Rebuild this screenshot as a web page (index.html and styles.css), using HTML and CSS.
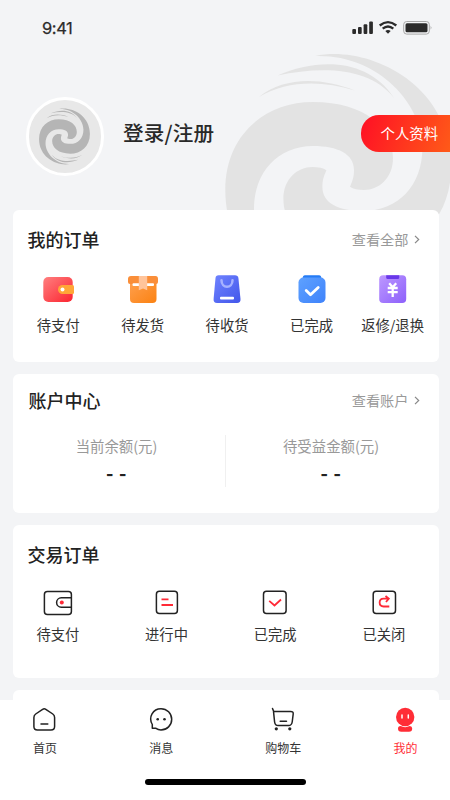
FILE: index.html
```html
<!DOCTYPE html>
<html lang="zh-CN">
<head>
<meta charset="utf-8">
<meta name="viewport" content="width=device-width, initial-scale=1">
<title>我的</title>
<link rel="stylesheet" href="styles.css">
</head>
<body>
<svg class="defs" aria-hidden="true">
  <defs>
    <g id="swirl-half">
      <path d="M361 301C310 312 225.3 275 225.3 190C225.3 135 265 102 313 102C365 102 393 128 393 158C393 178 379 190 364 190C358 190 353 189 350 186.7C353 180 354 176 354 170C354 154 338 146 313 146C278 146 254 172 254 209C254 255 300 303 361 301Z"/>
      <path d="M277.500 75.500C318 58 368 58 394 98C370 67 322 66 277.500 75.500Z"/>
      <path d="M259 97C284 77 320 77 355 90.500C320 80 286 81 259 97Z"/>
    </g>
    <symbol id="swirl" viewBox="225 52 226.500 253">
      <use href="#swirl-half"/>
      <use href="#swirl-half" transform="rotate(180 338.200 178.500)"/>
    </symbol>
    <linearGradient id="g-red" x1="0" y1="0" x2="1" y2="1"><stop offset="0" stop-color="#ff7f7f"/><stop offset="1" stop-color="#fb2430"/></linearGradient>
    <linearGradient id="g-orange" x1="0" y1="0" x2="1" y2="1"><stop offset="0" stop-color="#ffa04f"/><stop offset="1" stop-color="#fb8212"/></linearGradient>
    <linearGradient id="g-indigo" x1="0" y1="0" x2="1" y2="1"><stop offset="0" stop-color="#6f83ff"/><stop offset="1" stop-color="#4256ea"/></linearGradient>
    <linearGradient id="g-blue" x1="0" y1="0" x2="1" y2="1"><stop offset="0" stop-color="#5ea1ff"/><stop offset="1" stop-color="#3f83fb"/></linearGradient>
    <linearGradient id="g-purple" x1="0" y1="0" x2="1" y2="1"><stop offset="0" stop-color="#bd98ff"/><stop offset="1" stop-color="#8d60fb"/></linearGradient>
  </defs>
</svg>
<div class="screen">
  <svg class="backdrop"><use href="#swirl"/></svg>
  <header class="status">
    <span class="time">9:41</span>
    <svg class="signals" width="82" height="16" viewBox="351 20 82 16">
      <g fill="#2b2b2b">
        <rect x="352.300" y="29" width="3.700" height="5" rx="1"/><rect x="358" y="27" width="3.700" height="7" rx="1"/><rect x="363.600" y="24.300" width="3.700" height="9.700" rx="1"/><rect x="369.200" y="21.500" width="3.700" height="12.500" rx="1"/>
        <path d="M385.300 30.900Q388 28.900 390.700 30.900L388 33.700Z"/>
        <rect x="405.500" y="23.300" width="22" height="9" rx="1.500"/>
      </g>
      <g fill="none" stroke="#2b2b2b" stroke-width="2.300"><path d="M379.700 25.500Q388 18.700 396.300 25.500"/><path d="M382.700 28.700Q388 24.300 393.300 28.700"/></g>
      <rect x="403.700" y="21.500" width="25.600" height="12.600" rx="3" fill="none" stroke="#a8a8a8"/>
      <path d="M430.700 25.800Q432.300 27.700 430.700 29.800Z" fill="#999"/>
    </svg>
  </header>

  <section class="profile">
    <div class="avatar"><svg><use href="#swirl"/></svg></div>
    <h1>登录/注册</h1>
    <a class="profile-link">个人资料</a>
  </section>

  <main>
    <section class="card orders">
      <div class="card-head"><h2>我的订单</h2><a>查看全部<svg width="6" height="9" viewBox="0 0 6 9"><path d="M1 .8L4.700 4.500L1 8.200"/></svg></a></div>
      <ul class="grid five">
        <li><svg viewBox="43 274 32 30"><rect x="44.300" y="277" width="29.400" height="25" rx="5" fill="url(#g-red)"/><path d="M63.500 285H73.500Q75 285 75 286.500V292.700Q75 294 73.500 294H63.500A4.500 4.500 0 0 1 63.500 285Z" fill="#ffa637"/><circle cx="63.500" cy="289.600" r="2" fill="#fff"/></svg><span>待支付</span></li>
        <li><svg viewBox="126.500 274 32 30"><path d="M129.500 281H156V299Q156 303 152 303H133.500Q129.500 303 129.500 299Z" fill="url(#g-orange)"/><path d="M130.500 276H155Q157.500 276 157.500 279V282Q157.500 284 155.500 284H129.500Q127.500 284 127.500 282V279Q127.500 276 130.500 276Z" fill="#fa8e39"/><rect x="132" y="283.300" width="21.500" height="2.700" rx="1" fill="#fff"/><path d="M138.300 276H146.700V290.300L142.500 288.500L138.300 290.300Z" fill="#ffc49b"/></svg><span>待发货</span></li>
        <li><svg viewBox="211.500 274 32 30"><path d="M219 275.300H235.500Q238.500 275.300 238.900 278L241 299Q241.300 303 237.500 303H217.500Q213.800 303 214.100 299L216 278Q216.300 275.300 219 275.300Z" fill="url(#g-indigo)"/><path d="M222 280.300C222 289 233 289 233 280.300" fill="none" stroke="#a7b2ff" stroke-width="2.500" stroke-linecap="round"/><rect x="220.500" y="296.700" width="14" height="2.700" rx="1" fill="#fff"/></svg><span>待收货</span></li>
        <li><svg viewBox="295.500 274 32 30"><path d="M304.500 275.200H318.500Q321 275.200 321 279H302Q302 275.200 304.500 275.200Z" fill="#247bf5"/><rect x="298" y="277.500" width="27" height="25.500" rx="5" fill="url(#g-blue)"/><path d="M305.700 290.600L310 294.800L317.700 287.500" fill="none" stroke="#fff" stroke-width="2.800" stroke-linecap="round" stroke-linejoin="round"/></svg><span>已完成</span></li>
        <li><svg viewBox="376.800 274 32 30"><rect x="379" y="275.300" width="27" height="27.700" rx="4" fill="url(#g-purple)"/><path d="M386 275.300H399V277.500Q399 279 397.500 279H387.500Q386 279 386 277.500Z" fill="#6938e9"/><path d="M389 283.300L392.500 287.300L396 283.300M387.500 288H397.500M387.500 292.200H397.500M392.500 287.500V297" fill="none" stroke="#fff" stroke-width="2.300"/></svg><span>返修/退换</span></li>
      </ul>
    </section>

    <section class="card account">
      <div class="card-head"><h2>账户中心</h2><a>查看账户<svg width="6" height="9" viewBox="0 0 6 9"><path d="M1 .8L4.700 4.500L1 8.200"/></svg></a></div>
      <dl class="balances">
        <div><dt>当前余额(元)</dt><dd>- -</dd></div>
        <div><dt>待受益金额(元)</dt><dd>- -</dd></div>
      </dl>
    </section>

    <section class="card trades">
      <div class="card-head"><h2>交易订单</h2></div>
      <ul class="grid four">
        <li><svg viewBox="42.500 588 32 30"><g class="line"><rect x="44.900" y="591.400" width="27" height="23" rx="3"/><path d="M72 597.800H61.800A4.700 4.700 0 0 0 61.800 607.200H72"/></g><circle cx="62.300" cy="602.400" r="2" fill="#ff2a37"/></svg><span>待支付</span></li>
        <li><svg viewBox="150.500 588 32 30"><rect class="line" x="155.900" y="591.200" width="21" height="22.300" rx="3"/><path class="accent" d="M161 599.300H168M161 605H172.500"/></svg><span>进行中</span></li>
        <li><svg viewBox="259.500 588 32 30"><rect class="line" x="264" y="591.200" width="22.600" height="22.300" rx="3"/><path class="accent" d="M269.700 600.800L275 605.500L281.500 599.500"/></svg><span>已完成</span></li>
        <li><svg viewBox="368.700 588 32 30"><rect class="line" x="373.900" y="591.200" width="22.300" height="22.300" rx="3"/><path class="accent" d="M390 606.500H384.300C379 606.500 379 598.700 384.300 598.700H389M386.200 596L389.500 598.700L386.700 602"/></svg><span>已关闭</span></li>
      </ul>
    </section>
    <section class="card next"></section>
  </main>

  <nav class="tabbar">
    <ul>
      <li><svg viewBox="33 706 26 27" class="glyph"><path d="M43.600 709.300Q45.200 708.200 46.800 709.300L53.800 714Q55.600 715.300 55.600 717.500V726.500Q55.600 730 52 730H38.400Q34.900 730 34.900 726.500V717.500Q34.900 715.300 36.700 714ZM42 724H48.800"/></svg><span>首页</span></li>
      <li><svg viewBox="148 706 26 27" class="glyph"><path d="M152.300 728.300V724.500C148 717 153 708.700 161 708.700C167 708.700 171.700 713.500 171.700 719.300C171.700 725.300 167 729.900 161 729.900C158.900 729.900 157.300 729.300 156 728.300Z"/><g fill="#222" stroke="none"><circle cx="157.700" cy="719.300" r="1.300"/><circle cx="164.500" cy="719.300" r="1.300"/></g></svg><span>消息</span></li>
      <li><svg viewBox="270 706 26 27" class="glyph"><path d="M272.500 708.500L273.700 711.400H290.500Q293.500 711.400 293.200 714L292.200 722Q291.700 725.500 288.500 725.500H278.300Q275 725.500 274.600 722L273.500 711.400M280.200 721.200H286.500"/><g fill="#222" stroke="none"><circle cx="276.300" cy="728.800" r="1.600"/><circle cx="289.800" cy="728.800" r="1.600"/></g></svg><span>购物车</span></li>
      <li class="active"><svg viewBox="392 706 26 27"><circle cx="405.200" cy="717" r="9.200" fill="#ff2d36"/><path d="M400.500 726Q405 728.300 409.800 726Q412.200 726 412.200 728.500Q412.200 731.700 409 731.700H401.300Q398 731.700 398 728.500Q398 726 400.500 726Z" fill="#ff2d36"/><path d="M402 715V718M408.300 715V718" stroke="#fff" stroke-width="1.500" stroke-linecap="round"/></svg><span>我的</span></li>
    </ul>
    <div class="home-indicator"></div>
  </nav>
</div>
</body>
</html>
```
FILE: styles.css
```css
* { box-sizing: border-box; margin: 0; padding: 0; }
body { font-family: "Noto Sans CJK SC", sans-serif; color: #222; background: #f3f4f6; overflow: hidden; }
ul { list-style: none; }
svg { display: block; }
.defs { position: absolute; width: 0; height: 0; }
.screen { position: relative; height: 800px; overflow: hidden; display: flex; flex-direction: column; background: #f3f4f6; }
.backdrop { position: absolute; left: 225px; top: 52px; width: 226.5px; height: 253px; fill: #e3e3e3; clip-path: inset(0 0 91px 0); }

.status { height: 56px; padding: 0 17px 0 42px; display: flex; justify-content: space-between; align-items: center; }
.time { font: 400 16.5px/20px Inter, sans-serif; letter-spacing: -.4px; color: #2b2b2b; -webkit-text-stroke: .25px #2b2b2b; }

.profile { position: relative; height: 154px; padding: 41px 0 0 25.5px; display: flex; align-items: flex-start; }
.avatar { width: 78.5px; height: 78.5px; border: 3px solid #fff; border-radius: 50%; background: #e8e8e8; display: flex; align-items: center; justify-content: center; }
.avatar svg { width: 51px; height: 57px; fill: #b5b5b5; }
.profile h1 { margin: 20px 0 0 19px; font-size: 20.6px; line-height: 30px; font-weight: 500; color: #292929; letter-spacing: .15px; }
.profile-link { margin: 18px 0 0 auto; width: 89.5px; height: 36.5px; padding-left: 20px; border-radius: 18px 0 0 18px; background: linear-gradient(110deg, #ff0f25, #ff5a18); color: #fff; font-size: 14.4px; line-height: 35px; }

main { position: relative; flex: 1; min-height: 0; padding: 0 11.5px 0 12.5px; display: flex; flex-direction: column; gap: 12px; overflow: hidden; }
.card { flex: none; background: #fff; border-radius: 6px; }
.orders { height: 152px; }
.account { height: 139px; }
.trades { height: 153px; }
.next { height: 50px; }
.card-head { display: flex; justify-content: space-between; align-items: center; padding: 14px 19px 0 15px; height: 44px; }
.card h2 { font-size: 18px; line-height: 27px; font-weight: 500; color: #222; }
.card-head a { display: flex; align-items: center; gap: 5px; font-size: 14.2px; line-height: 24px; color: #999; }
.card-head a svg { fill: none; stroke: #888; stroke-width: 1.2; }
.account .card-head { padding-top: 9px; height: 43px; padding-left: 16px; }

.grid { display: grid; justify-content: start; }
.grid li { display: flex; flex-direction: column; align-items: center; font-size: 14.3px; line-height: 20px; color: #333; white-space: nowrap; }
.grid svg { width: 32px; height: 30px; }
.five { grid-template-columns: 84.5px 84.3px 84.5px 84.5px 77.5px; padding: 20px 0 0 3.5px; }
.five li { gap: 11px; }
.four { grid-template-columns: repeat(4, 108.7px); margin-left: -9px; padding-top: 19px; }
.four li { gap: 6px; }
.line { fill: none; stroke: #222; stroke-width: 1.5; }
.accent { fill: none; stroke: #ff2a37; stroke-width: 1.8; }

.balances { display: grid; grid-template-columns: 212px 1fr; margin-top: 18px; text-align: center; }
.balances div { height: 52px; padding-right: 4px; }
.balances div + div { border-left: 1px solid #f0f0f0; padding-right: 2px; }
.balances dt { font-size: 14.4px; line-height: 22px; color: #999; }
.balances dd { font-size: 20px; line-height: 32px; font-weight: 700; color: #222; letter-spacing: .5px; }

.tabbar { position: relative; height: 100px; background: #fff; display: flex; flex-direction: column; align-items: center; }
.tabbar ul { width: 100%; padding: 6px 32.5px 0 33px; display: flex; justify-content: space-between; }
.tabbar li { display: flex; flex-direction: column; align-items: center; gap: 6px; font-size: 12px; line-height: 18px; color: #333; }
.tabbar li svg { width: 26px; height: 27px; margin: 0 -1px; }
.tabbar .active { color: #ff2d36; }
.glyph { fill: none; stroke: #222; stroke-width: 1.5; stroke-linejoin: round; stroke-linecap: round; }
.home-indicator { width: 161px; height: 6px; margin-top: 22px; border-radius: 3px; background: #000; }
```
